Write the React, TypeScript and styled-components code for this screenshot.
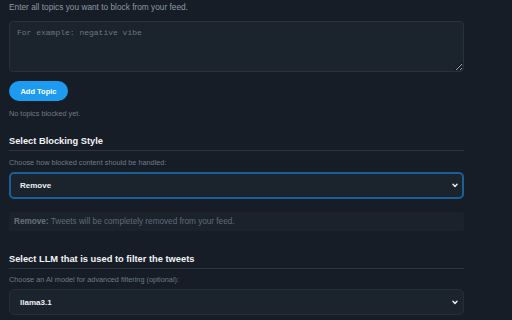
import React from "react";
import styled, { createGlobalStyle } from "styled-components";

const Global = createGlobalStyle`
  html, body { margin: 0; padding: 0; background: #171d26; }
  body { font-family: "Liberation Sans", Arial, sans-serif; color: #e7e9ea; }
  * { box-sizing: border-box; }
`;

const Page = styled.div`
  width: 512px;
  height: 320px;
  overflow: hidden;
  background: #171d26;
  padding: 0 48px 0 9px;
  display: flex;
  flex-direction: column;
`;

const Hint = styled.p<{ $top?: number }>`
  margin: ${(p) => p.$top ?? 0}px 0 0;
  font-size: 8.3px;
  line-height: 12px;
  color: #8b98a5;
`;

const SmallHint = styled(Hint)`
  font-size: 7.3px;
  color: #6e7a86;
`;

const TextArea = styled.textarea`
  margin-top: 8px;
  width: 455px;
  height: 51px;
  resize: vertical;
  background: #1b232d;
  border: 1px solid #29323c;
  border-radius: 4px;
  padding: 6px 7px;
  font-family: "Liberation Mono", monospace;
  font-size: 8px;
  color: #e7e9ea;
  outline: none;
  &::placeholder { color: #6b7681; }
`;

const Button = styled.button`
  margin-top: 9px;
  align-self: flex-start;
  width: 59px;
  height: 20px;
  border: none;
  border-radius: 10px;
  background: #1d9bf0;
  color: #fff;
  font-family: "Liberation Sans", Arial, sans-serif;
  font-weight: bold;
  font-size: 7.5px;
  padding: 0;
`;

const Section = styled.section<{ $top: number }>`
  margin-top: ${(p) => p.$top}px;
  display: flex;
  flex-direction: column;
`;

const Heading = styled.h2`
  margin: 0;
  font-size: 9.3px;
  line-height: 14px;
  font-weight: bold;
  color: #f2f4f5;
  padding-bottom: 2px;
  border-bottom: 1px solid #2c343e;
  width: 455px;
`;

const SelectBox = styled.div<{ $focused?: boolean; $top: number }>`
  margin-top: ${(p) => p.$top}px;
  width: 455px;
  height: ${(p) => (p.$focused ? 27 : 26)}px;
  border-radius: 5px;
  background: #1b232d;
  border: ${(p) => (p.$focused ? "2px solid #1c5f97" : "1px solid #252e38")};
  display: flex;
  align-items: center;
  justify-content: space-between;
  padding: 0 ${(p) => (p.$focused ? 4 : 5)}px 0 ${(p) => (p.$focused ? 9 : 10)}px;
  font-size: 8px;
  font-weight: bold;
  color: #eef0f2;
`;

const Info = styled.div`
  margin-top: 13px;
  width: 455px;
  height: 19px;
  background: #1b222c;
  border-radius: 2px;
  display: flex;
  align-items: center;
  padding-left: 5px;
  font-size: 8.2px;
  color: #5f6b77;
  b { color: #66727e; }
`;

const Chevron = () => (
  <svg width="6" height="5" viewBox="0 0 6 5">
    <path d="M1 1.2 L3 3.4 L5 1.2" fill="none" stroke="#e8eaec" strokeWidth="1.5" strokeLinecap="round" strokeLinejoin="round" />
  </svg>
);

export default function App() {
  return (
    <>
      <Global />
      <Page>
        <Hint $top={1}>Enter all topics you want to block from your feed.</Hint>
        <TextArea placeholder="For example: negative vibe" />
        <Button>Add Topic</Button>
        <SmallHint $top={7}>No topics blocked yet.</SmallHint>
        <Section $top={14}>
          <Heading>Select Blocking Style</Heading>
          <SmallHint $top={6}>Choose how blocked content should be handled:</SmallHint>
          <SelectBox $focused $top={3}>
            <span>Remove</span>
            <Chevron />
          </SelectBox>
          <Info>
            <span><b>Remove:</b> Tweets will be completely removed from your feed.</span>
          </Info>
        </Section>
        <Section $top={21}>
          <Heading>Select LLM that is used to filter the tweets</Heading>
          <SmallHint $top={5}>Choose an AI model for advanced filtering (optional):</SmallHint>
          <SelectBox $top={3}>
            <span>llama3.1</span>
            <Chevron />
          </SelectBox>
        </Section>
      </Page>
    </>
  );
}
